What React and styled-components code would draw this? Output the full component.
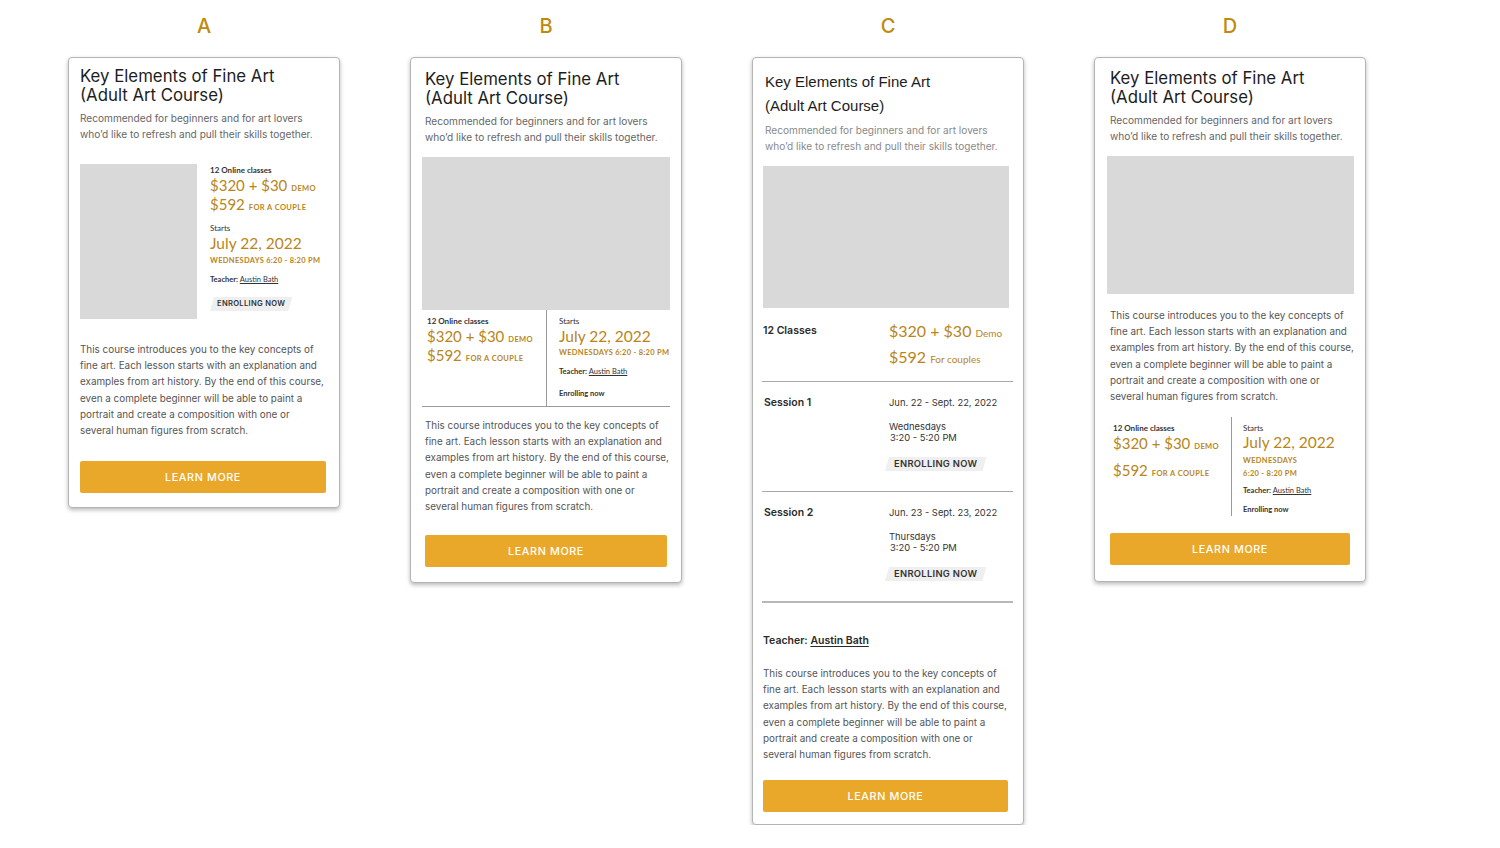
import React from "react";
import styled, { createGlobalStyle } from "styled-components";

const GOLD = "#b8861a";
const SANS = `Inter, "Open Sans", sans-serif`;
const GEO = `Lato, "Noto Sans", sans-serif`;

const GlobalStyle = createGlobalStyle`
  body {
    margin: 0;
    background: #fff;
    font-family: ${SANS};
  }
`;

const Page = styled.div`
  display: flex;
  align-items: flex-start;
  gap: 70px;
  padding: 14px 0 0 68px;
`;

const Column = styled.div`
  width: 272px;
  display: flex;
  flex-direction: column;
`;

const Letter = styled.div`
  text-align: center;
  font-size: 20px;
  line-height: 24px;
  font-weight: 500;
  color: #c08a0c;
  margin-bottom: 19px;
`;

const Card = styled.div`
  box-sizing: border-box;
  width: 272px;
  background: #fff;
  border: 1px solid #b4b4b4;
  border-radius: 4px;
  box-shadow: 0 2px 4px rgba(0, 0, 0, 0.28);
  padding: ${(p) => p.$pad};
`;

const Title = styled.h2`
  margin: 0;
  font-weight: 400;
  color: #1d1d1d;
  white-space: nowrap;
  font-family: ${(p) => (p.$classic ? `"Liberation Sans", Arial, sans-serif` : SANS)};
  font-size: ${(p) => (p.$classic ? "15px" : "16.8px")};
  line-height: ${(p) => (p.$classic ? "24px" : "19px")};
  padding-left: ${(p) => p.$indent || "0"};
`;

const Subtitle = styled.p`
  margin: ${(p) => p.$mt} 0 0;
  font-size: 10.1px;
  line-height: 16px;
  white-space: nowrap;
  color: ${(p) => (p.$light ? "#8a8a8a" : "#666")};
`;

const Placeholder = styled.div`
  flex: none;
  background: #d9d9d9;
  width: ${(p) => p.$w};
  height: ${(p) => p.$h};
  margin: ${(p) => p.$m || "0"};
`;

const Description = styled.p`
  margin: ${(p) => p.$m};
  font-size: 9.9px;
  line-height: 16.2px;
  white-space: nowrap;
  color: #555;
`;

const Button = styled.button`
  display: block;
  width: 100%;
  height: 32px;
  margin-top: ${(p) => p.$mt};
  border: none;
  border-radius: 2px;
  background: #e9a829;
  color: #fff;
  font-family: ${SANS};
  font-size: 10.8px;
  font-weight: 500;
  letter-spacing: 0.6px;
`;

/* info bits */
const Label = styled.div`
  font-family: ${GEO};
  font-size: 8px;
  line-height: 12px;
  font-weight: ${(p) => (p.$plain ? 400 : 700)};
  color: #333;
  margin-top: ${(p) => p.$mt || "0"};
`;

const Price = styled.div`
  font-family: ${GEO};
  font-size: 15px;
  line-height: 19px;
  color: ${GOLD};
  white-space: nowrap;
  margin-top: ${(p) => p.$mt || "0"};
`;

const Unit = styled.span`
  font-size: 7.5px;
  line-height: 1;
  letter-spacing: 0.4px;
  text-transform: uppercase;
  margin-left: 4px;
  font-weight: 700;
`;

const DateBig = styled.div`
  font-family: ${GEO};
  font-size: 15.5px;
  line-height: ${(p) => p.$lh || "18px"};
  color: ${GOLD};
  white-space: nowrap;
`;

const GoldCaps = styled.div`
  font-family: ${GEO};
  font-size: 7.5px;
  line-height: ${(p) => p.$lh || "12px"};
  font-weight: 700;
  letter-spacing: 0.3px;
  text-transform: uppercase;
  color: ${GOLD};
  white-space: nowrap;
  margin-top: ${(p) => p.$mt || "0"};
`;

const Teacher = styled.div`
  font-family: ${GEO};
  font-size: 7.5px;
  line-height: 12px;
  font-weight: 700;
  color: #333;
  margin-top: ${(p) => p.$mt || "0"};
  u {
    font-weight: 400;
    text-underline-offset: 1px;
  }
`;

const Badge = styled.div`
  display: inline-block;
  align-self: flex-start;
  margin-top: ${(p) => p.$mt || "0"};
  margin-left: ${(p) => (p.$big ? "-4px" : "0")};
  padding: 0 ${(p) => (p.$big ? "9px" : "7px")};
  height: 14px;
  line-height: 14px;
  font-size: ${(p) => (p.$big ? "9.4px" : "7.6px")};
  font-weight: 600;
  letter-spacing: 0.3px;
  color: #333;
  background: #efefef;
  clip-path: polygon(4px 0, 100% 0, calc(100% - 4px) 100%, 0 100%);
`;

/* card A */
const MediaRow = styled.div`
  display: flex;
  gap: 13px;
  margin-top: 22px;
`;

const InfoStack = styled.div`
  display: flex;
  flex-direction: column;
`;

/* cards B and D */
const SplitInfo = styled.div`
  display: grid;
  grid-template-columns: ${(p) => p.$cols};
  margin: ${(p) => p.$m};
  border-bottom: ${(p) => (p.$ruled ? "1px solid #9a9a9a" : "none")};
`;

const SplitCol = styled.div`
  display: flex;
  flex-direction: column;
  padding: ${(p) => p.$pad};
  border-left: ${(p) => (p.$divider ? "1px solid #9a9a9a" : "none")};
`;

/* card C */
const Section = styled.div`
  display: grid;
  grid-template-columns: 127px 1fr;
  padding: ${(p) => p.$pad};
  border-bottom: ${(p) => p.$rule || "1px solid #a8a8a8"};
`;

const SectionLabel = styled.div`
  font-size: 10.5px;
  font-weight: 600;
  color: #2a2a2a;
  line-height: ${(p) => p.$lh};
  padding-left: ${(p) => p.$indent || "0"};
`;

const SectionBody = styled.div`
  display: flex;
  flex-direction: column;
`;

const BigPrice = styled.div`
  font-family: ${GEO};
  font-size: 16px;
  line-height: 26px;
  color: ${GOLD};
  white-space: nowrap;
`;

const SoftUnit = styled.span`
  font-size: 10px;
  line-height: 1;
  margin-left: 4px;
`;

const SessionText = styled.div`
  font-size: 9.4px;
  line-height: ${(p) => p.$lh || "12px"};
  color: #333;
  margin-top: ${(p) => p.$mt || "0"};
  padding-left: ${(p) => p.$indent || "0"};
`;

const TeacherLine = styled.div`
  margin: 31px 0 0 1px;
  font-size: 10.5px;
  line-height: 14px;
  font-weight: 600;
  color: #2a2a2a;
  u {
    text-underline-offset: 2px;
  }
`;

const TITLE = ["Key Elements of Fine Art", "(Adult Art Course)"];
const DESC = [
  "This course introduces you to the key concepts of",
  "fine art. Each lesson starts with an explanation and",
  "examples from art history. By the end of this course,",
  "even a complete beginner will be able to paint a",
  "portrait and create a composition with one or",
  "several human figures from scratch.",
];

const Lines = ({ lines }) =>
  lines.map((l, i) => (
    <React.Fragment key={i}>
      {l}
      {i < lines.length - 1 && <br />}
    </React.Fragment>
  ));

const SubLines = () => (
  <>
    Recommended for beginners and for art lovers
    <br />
    who’d like to refresh and pull their skills together.
  </>
);

function CardA() {
  return (
    <Card $pad="8.5px 13px 14px 11px">
      <Title>
        <Lines lines={TITLE} />
      </Title>
      <Subtitle $mt="5.5px">
        <SubLines />
      </Subtitle>
      <MediaRow>
        <Placeholder $w="117px" $h="155px" />
        <InfoStack>
          <Label>12 Online classes</Label>
          <Price>
            $320 + $30<Unit>Demo</Unit>
          </Price>
          <Price>
            $592<Unit>For a couple</Unit>
          </Price>
          <Label $mt="8px" $plain>
            Starts
          </Label>
          <DateBig>July 22, 2022</DateBig>
          <GoldCaps $mt="3px">Wednesdays 6:20 - 8:20 PM</GoldCaps>
          <Teacher $mt="7px">
            Teacher: <u>Austin Bath</u>
          </Teacher>
          <Badge $mt="11px">ENROLLING NOW</Badge>
        </InfoStack>
      </MediaRow>
      <Description $m="22px 0 0">
        <Lines lines={DESC} />
      </Description>
      <Button $mt="23px">LEARN MORE</Button>
    </Card>
  );
}

function CardB() {
  return (
    <Card $pad="11.5px 14px 15px 14px">
      <Title>
        <Lines lines={TITLE} />
      </Title>
      <Subtitle $mt="5.5px">
        <SubLines />
      </Subtitle>
      <Placeholder $w="248px" $h="153px" $m="12px -3px 0" />
      <SplitInfo $cols="124px 1fr" $m="0 -3px" $ruled>
        <SplitCol $pad="5px 0 0 5px">
          <Label>12 Online classes</Label>
          <Price>
            $320 + $30<Unit>Demo</Unit>
          </Price>
          <Price>
            $592<Unit>For a couple</Unit>
          </Price>
        </SplitCol>
        <SplitCol $pad="5px 0 6px 12px" $divider>
          <Label $plain>Starts</Label>
          <DateBig>July 22, 2022</DateBig>
          <GoldCaps $mt="2px">Wednesdays 6:20 - 8:20 PM</GoldCaps>
          <Teacher $mt="7px">
            Teacher: <u>Austin Bath</u>
          </Teacher>
          <Teacher $mt="10px">Enrolling now</Teacher>
        </SplitCol>
      </SplitInfo>
      <Description $m="10px 0 0">
        <Lines lines={DESC} />
      </Description>
      <Button $mt="21px">LEARN MORE</Button>
    </Card>
  );
}

function Session({ name, dates, day, rule }) {
  return (
    <Section $pad="15px 0 20px" $rule={rule}>
      <SectionLabel $lh="12px" $indent="2px">
        {name}
      </SectionLabel>
      <SectionBody>
        <SessionText>{dates}</SessionText>
        <SessionText $mt="12px" $lh="11px">
          {day}
        </SessionText>
        <SessionText $lh="11px" $indent="1px">
          3:20 - 5:20 PM
        </SessionText>
        <Badge $big $mt="14px">
          ENROLLING NOW
        </Badge>
      </SectionBody>
    </Section>
  );
}

function CardC() {
  return (
    <Card $pad="12px 10px 12px 9px">
      <Title $classic $indent="3px">
        <Lines lines={TITLE} />
      </Title>
      <Subtitle $mt="4px" $light style={{ paddingLeft: 3 }}>
        <SubLines />
      </Subtitle>
      <Placeholder $w="246px" $h="142px" $m="12px 0 0 1px" />
      <Section $pad="10px 0 11px">
        <SectionLabel $lh="26px" $indent="1px">
          12 Classes
        </SectionLabel>
        <SectionBody>
          <BigPrice>
            $320 + $30<SoftUnit>Demo</SoftUnit>
          </BigPrice>
          <BigPrice>
            $592<SoftUnit>For couples</SoftUnit>
          </BigPrice>
        </SectionBody>
      </Section>
      <Session name="Session 1" dates="Jun. 22 - Sept. 22, 2022" day="Wednesdays" />
      <Session
        name="Session 2"
        dates="Jun. 23 - Sept. 23, 2022"
        day="Thursdays"
        rule="2px solid #b8b8b8"
      />
      <TeacherLine>
        Teacher: <u>Austin Bath</u>
      </TeacherLine>
      <Description $m="17px 0 0 1px">
        <Lines lines={DESC} />
      </Description>
      <Button $mt="18px" style={{ marginLeft: 1, width: 245 }}>
        LEARN MORE
      </Button>
    </Card>
  );
}

function CardD() {
  return (
    <Card $pad="10.5px 15px 16px 15px">
      <Title>
        <Lines lines={TITLE} />
      </Title>
      <Subtitle $mt="5.5px">
        <SubLines />
      </Subtitle>
      <Placeholder $w="247px" $h="138px" $m="12px -4px 0 -3px" />
      <Description $m="13px 0 0">
        <Lines lines={DESC} />
      </Description>
      <SplitInfo $cols="124px 1fr" $m="13px -4px 0 -3px">
        <SplitCol $pad="5px 0 0 6px">
          <Label>12 Online classes</Label>
          <Price>
            $320 + $30<Unit>Demo</Unit>
          </Price>
          <Price $mt="8px">
            $592<Unit>For a couple</Unit>
          </Price>
        </SplitCol>
        <SplitCol $pad="5px 0 0 11px" $divider>
          <Label $plain>Starts</Label>
          <DateBig $lh="16px">July 22, 2022</DateBig>
          <GoldCaps $mt="3.5px" $lh="13px">
            Wednesdays
            <br />
            6:20 - 8:20 PM
          </GoldCaps>
          <Teacher $mt="5.5px">
            Teacher: <u>Austin Bath</u>
          </Teacher>
          <Teacher $mt="7px">Enrolling now</Teacher>
        </SplitCol>
      </SplitInfo>
      <Button $mt="17px">LEARN MORE</Button>
    </Card>
  );
}

export default function App() {
  return (
    <>
      <GlobalStyle />
      <Page>
        <Column>
          <Letter>A</Letter>
          <CardA />
        </Column>
        <Column>
          <Letter>B</Letter>
          <CardB />
        </Column>
        <Column>
          <Letter>C</Letter>
          <CardC />
        </Column>
        <Column>
          <Letter>D</Letter>
          <CardD />
        </Column>
      </Page>
    </>
  );
}
